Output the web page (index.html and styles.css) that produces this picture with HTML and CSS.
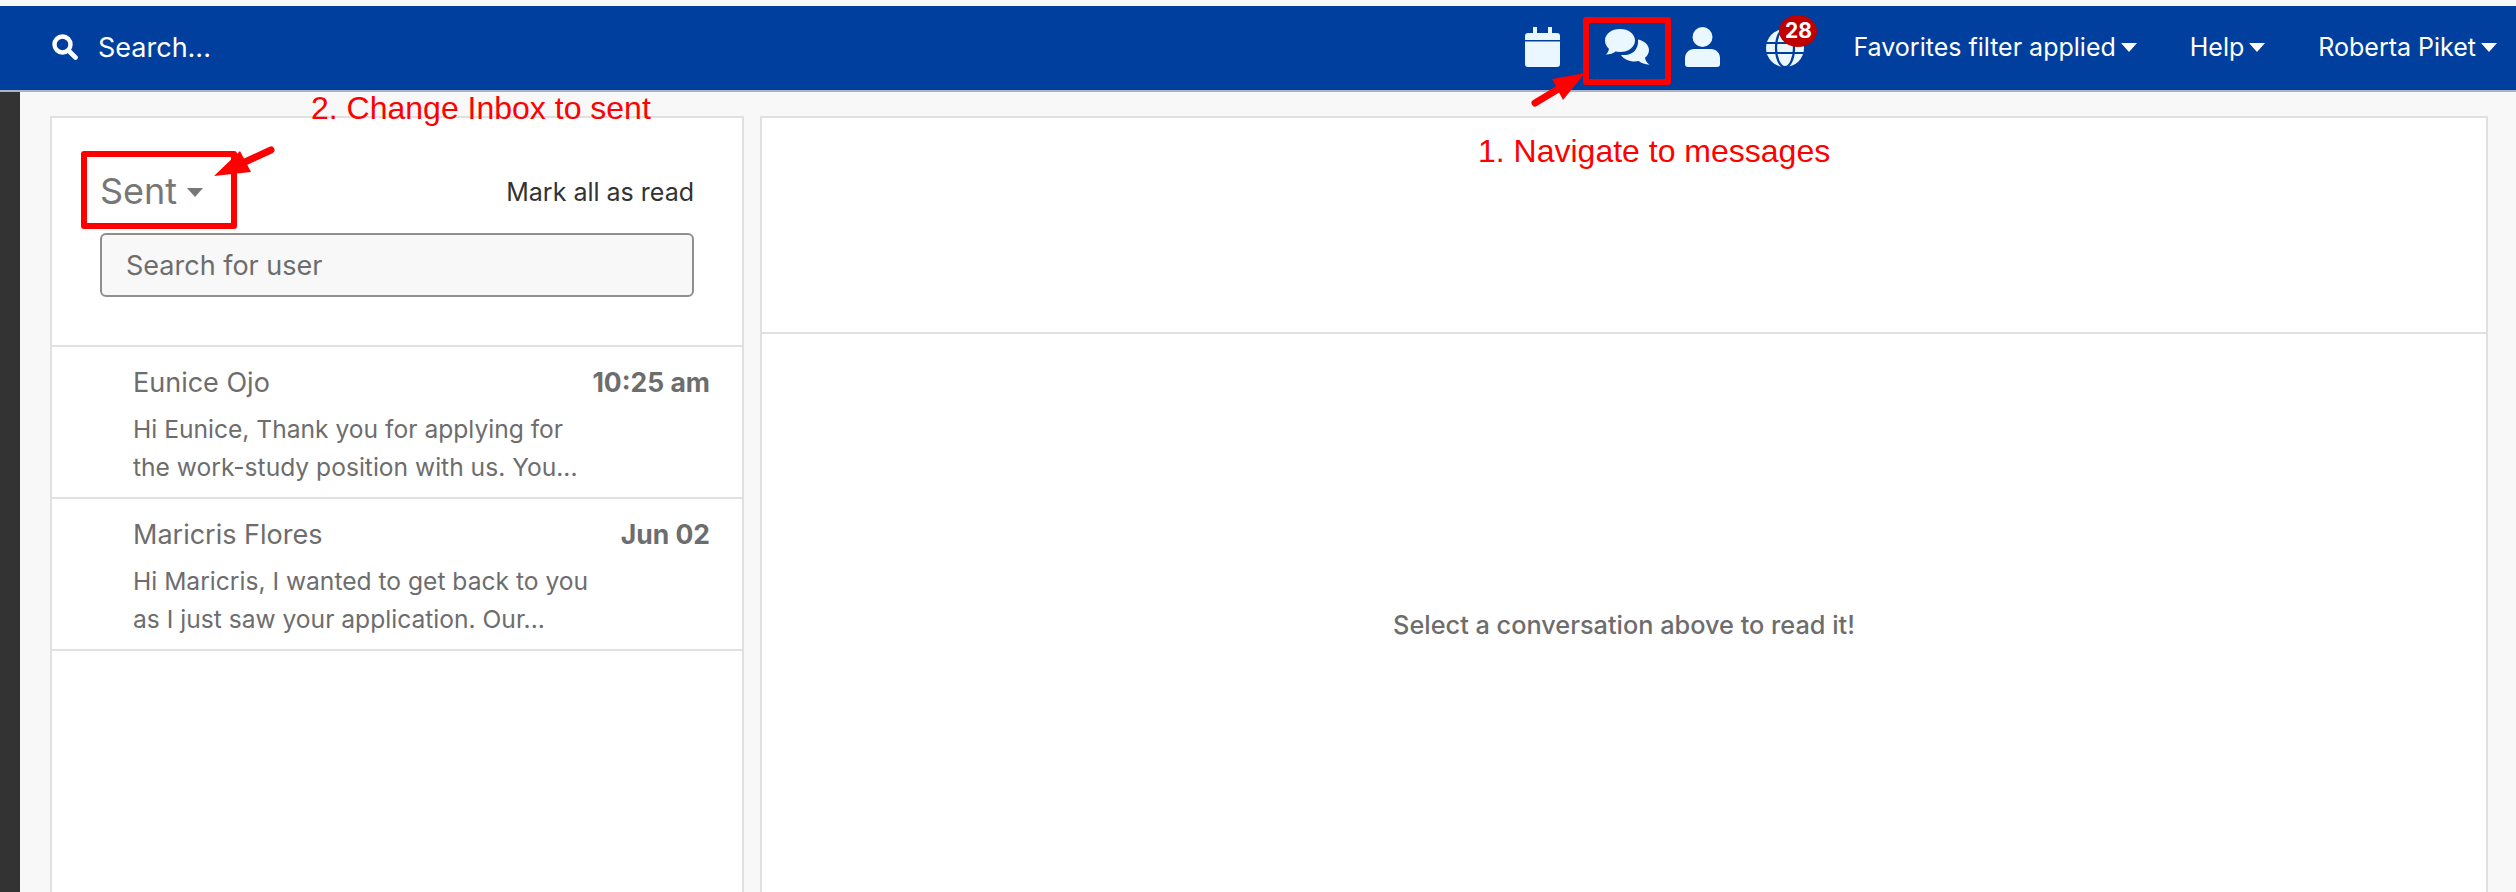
FILE: index.html
```html
<!DOCTYPE html>
<html lang="en">
<head>
<meta charset="utf-8">
<title>Messages</title>
<link rel="stylesheet" href="styles.css">
</head>
<body>
<header class="nav">
  <div class="nav-search">
    <svg class="icon-search" viewBox="0 0 26 26"><circle cx="10.5" cy="10.5" r="8" fill="none" stroke="#fff" stroke-width="4.4"/><path d="M16.5 16.5L23.5 23.5" stroke="#fff" stroke-width="4.6" stroke-linecap="round"/></svg>
    <span class="nav-search-text">Search...</span>
  </div>
  <nav class="nav-right">
    <svg class="icon-cal" viewBox="0 0 35 40"><path fill="#eaf7ff" d="M8 0h4v6h11V0h4v6h5a3 3 0 0 1 3 3v4H0V9a3 3 0 0 1 3-3h5zM0 14.500h35V37a3 3 0 0 1-3 3H3a3 3 0 0 1-3-3z"/></svg>
    <svg class="icon-chat" viewBox="0 0 45 36"><path fill="#eaf7ff" d="M15 0c8.300 0 15 4.800 15 11.500S23.300 23 15 23c-1.600 0-3.100-.2-4.500-.5C8.400 24.500 5 25.500 .8 25.500c1.700-1.400 3-3.500 3.100-5.800C1.500 17.700 0 14.800 0 11.500 0 4.800 6.700 0 15 0z"/><path fill="#eaf7ff" d="M33 10.500c6.200 1.300 11 5.400 11 10.500 0 3.100-1.600 5.800-4 7.700.2 2.500 2 5 4.500 7-4.500-.2-8.300-1.400-10.800-3.600-1.200.2-2.400.4-3.700.4-6.200 0-11.500-2.400-14-6.500 1.600.2 3 .1 4 0C28 26 34 19.500 33 10.500z"/></svg>
    <svg class="icon-user" viewBox="0 0 35 40"><circle cx="17.500" cy="10" r="10" fill="#eaf7ff"/><path fill="#eaf7ff" d="M9 22h17c5 0 9 4 9 9v6a3 3 0 0 1-3 3H3a3 3 0 0 1-3-3v-6c0-5 4-9 9-9z"/></svg>
    <div class="globe-wrap">
      <svg class="icon-globe" viewBox="0 0 38 38"><circle cx="19" cy="19" r="19" fill="#eaf7ff"/><path d="M0 14h38M0 24h38" stroke="#003f9e" stroke-width="2.200" fill="none"/><ellipse cx="19" cy="19" rx="9" ry="19" stroke="#003f9e" stroke-width="2.200" fill="none"/></svg>
      <span class="badge">28</span>
    </div>
    <span class="nav-link nav-fav">Favorites filter applied<i class="caret"></i></span>
    <span class="nav-link nav-help">Help<i class="caret"></i></span>
    <span class="nav-link nav-user">Roberta Piket<i class="caret"></i></span>
  </nav>
</header>
<main class="page">
  <aside class="rail"></aside>
  <section class="card list-card">
    <div class="list-head">
      <div class="list-title-row">
        <span class="list-title">Sent<i class="caret caret-grey"></i></span>
        <span class="mark-read">Mark all as read</span>
      </div>
      <div class="search-box">Search for user</div>
    </div>
    <article class="row">
      <div class="row-top"><span class="row-name">Eunice Ojo</span><span class="row-time">10:25 am</span></div>
      <p class="row-text">Hi Eunice, Thank you for applying for<br>the work-study position with us. You...</p>
    </article>
    <article class="row">
      <div class="row-top"><span class="row-name">Maricris Flores</span><span class="row-time">Jun 02</span></div>
      <p class="row-text">Hi Maricris, I wanted to get back to you<br>as I just saw your application. Our...</p>
    </article>
  </section>
  <section class="card detail-card">
    <div class="detail-head"></div>
    <div class="detail-body">Select a conversation above to read it!</div>
  </section>
</main>
<div class="note note-1">1. Navigate to messages</div>
<div class="note note-2">2. Change Inbox to sent</div>
<div class="mark mark-1"></div>
<div class="mark mark-2"></div>
<svg class="arrows" viewBox="0 0 2516 892">
  <path d="M1535 103L1560 88" stroke="#ff0000" stroke-width="7" stroke-linecap="round"/>
  <path fill="#ff0000" d="M1585 73L1552 79L1563 100z"/>
  <path d="M271 150L245 162" stroke="#ff0000" stroke-width="7" stroke-linecap="round"/>
  <path fill="#ff0000" d="M214 176L240 151L251 172z"/>
</svg>
</body>
</html>
```
FILE: styles.css
```css
* { box-sizing: border-box; }
html, body { margin: 0; height: 100%; overflow: hidden; }
body {
  padding-top: 6px;
  background: #f8f8f8;
  font-family: Inter, "Liberation Sans", sans-serif;
  color: #6d6d6d;
}
.nav {
  height: 86px;
  background: #003f9e;
  border-bottom: 2px solid #aab4c4;
  display: flex;
  align-items: center;
  justify-content: space-between;
  padding: 0 19px 2px 52px;
  color: #fff;
}
.nav-search { display: flex; align-items: center; gap: 20px; }
.icon-search { width: 26px; height: 26px; }
.nav-search-text { font-size: 27px; }
.nav-right { display: flex; align-items: center; }
.icon-cal { width: 35px; height: 40px; margin-right: 45px; }
.icon-chat { width: 45px; height: 36px; margin-right: 35px; }
.icon-user { width: 35px; height: 40px; margin-right: 46px; }
.globe-wrap { position: relative; width: 38px; height: 38px; margin-right: 49px; margin-top: 2px; }
.icon-globe { width: 38px; height: 38px; display: block; }
.badge {
  position: absolute;
  left: 13px;
  top: -14px;
  width: 38px;
  height: 32px;
  border-radius: 50%;
  background: #c00000;
  color: #fff;
  font-weight: 700;
  font-size: 21px;
  line-height: 32px;
  text-align: center;
}
.nav-link { font-size: 25px; display: inline-flex; align-items: center; }
.nav-fav { margin-right: 53px; }
.nav-help { margin-right: 53px; }
.caret {
  display: inline-block;
  width: 0;
  height: 0;
  margin-left: 5px;
  border-left: 8px solid transparent;
  border-right: 8px solid transparent;
  border-top: 9px solid #fff;
}
.page {
  display: flex;
  height: calc(100% - 86px);
}
.rail { width: 20px; background: #333; flex: none; }
.card {
  background: #fff;
  border: 2px solid #e0e0e0;
  border-bottom: 0;
  margin-top: 24px;
  height: calc(100% - 24px);
  flex: none;
}
.list-card { width: 694px; margin-left: 30px; }
.detail-card { width: 1728px; margin-left: 16px; }
.list-head { height: 229px; padding: 0 48px; border-bottom: 2px solid #e0e0e0; }
.list-title-row {
  display: flex;
  justify-content: space-between;
  align-items: center;
  padding-top: 31px;
  height: 115px;
}
.list-title { font-size: 36px; color: #777; display: inline-flex; align-items: center; }
.caret-grey { border-top-color: #777; margin-left: 10px; margin-top: 3px; }
.mark-read { font-size: 25px; color: #333; margin-top: 2px; }
.search-box {
  height: 64px;
  background: #f8f8f8;
  border: 2px solid #8f8f8f;
  border-radius: 6px;
  padding-left: 24px;
  font-size: 27px;
  line-height: 61px;
  color: #6d6d6d;
}
.row {
  height: 152px;
  padding: 17px 32px 0 81px;
  border-bottom: 2px solid #e0e0e0;
}
.row-top { display: flex; justify-content: space-between; align-items: center; height: 36px; }
.row-name { font-size: 27px; }
.row-time { font-size: 26.500px; font-weight: 700; }
.row-text { margin: 10px 0 0; font-size: 24.600px; line-height: 38px; }
.detail-head { height: 216px; border-bottom: 2px solid #e0e0e0; }
.detail-body { text-align: center; padding-top: 275px; font-size: 25.300px; font-weight: 500; }
.note {
  position: absolute;
  font-family: "Liberation Sans", sans-serif;
  font-size: 32px;
  line-height: 36px;
  color: #ff0000;
  white-space: nowrap;
}
.note-1 { left: 1478px; top: 133px; }
.note-2 { left: 311px; top: 90px; }
.mark { position: absolute; border: 6px solid #ff0000; border-radius: 3px; }
.mark-1 { left: 1583px; top: 17px; width: 88px; height: 68px; }
.mark-2 { left: 81px; top: 151px; width: 156px; height: 78px; }
.arrows { position: absolute; left: 0; top: 0; width: 2516px; height: 892px; pointer-events: none; }
```
